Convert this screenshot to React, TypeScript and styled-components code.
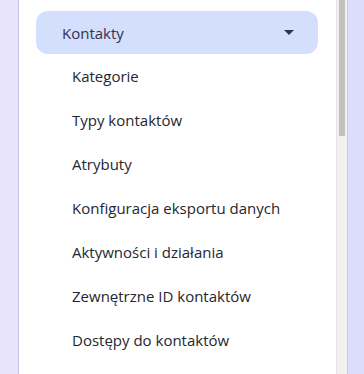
import * as React from 'react'
import styled, { createGlobalStyle } from 'styled-components'

const subItems = [
  'Kategorie',
  'Typy kontaktów',
  'Atrybuty',
  'Konfiguracja eksportu danych',
  'Aktywności i działania',
  'Zewnętrzne ID kontaktów',
  'Dostępy do kontaktów',
]

const App = () => {
  return (
    <Layout>
      <GlobalStyle />
      <Rail />
      <Sidebar>
        <Menu>
          <Group>
            <GroupHeader>
              <span>Kontakty</span>
              <Caret viewBox="0 0 10 5" aria-hidden>
                <path d="M0 0h10L5 5z" />
              </Caret>
            </GroupHeader>
            {subItems.map(label => (
              <SubItem key={label}>{label}</SubItem>
            ))}
          </Group>
        </Menu>
        <ScrollTrack>
          <ScrollThumb style={{ height: `${(374 / 1030) * 100}%` }} />
        </ScrollTrack>
      </Sidebar>
      <Content />
    </Layout>
  )
}

const GlobalStyle = createGlobalStyle`
  html, body {
    margin: 0;
    padding: 0;
    height: 100%;
    overflow: hidden;
  }
  body {
    font-family: 'Open Sans', 'Noto Sans', sans-serif;
    background: #dcdcfd;
  }
  #root {
    height: 100%;
  }
`

const Layout = styled.div`
  display: flex;
  height: 374px;
`

const Rail = styled.div`
  width: 18px;
  flex-shrink: 0;
  background: #e7e4fc;
  border-right: 1px solid #c6c2e8;
`

const Sidebar = styled.nav`
  display: flex;
  width: 328px;
  flex-shrink: 0;
  background: #ffffff;
  border-right: 1px solid #c9c9e0;
`

const Menu = styled.ul`
  flex: 1;
  list-style: none;
  margin: 0;
  padding: 11px 18px 0 17px;
  overflow: hidden;
`

const Group = styled.li`
  display: flex;
  flex-direction: column;
`

const GroupHeader = styled.div`
  display: flex;
  align-items: center;
  justify-content: space-between;
  height: 43px;
  padding: 0 8px 0 26px;
  border-radius: 12px;
  background: #d4defd;
  color: #2f3350;
  font-size: 15px;
  padding-right: 24px;
`

const Caret = styled.svg`
  width: 10px;
  height: 5px;
  fill: #2f3550;
`

const SubItem = styled.div`
  display: flex;
  align-items: center;
  height: 44px;
  padding-left: 36px;
  color: #26262e;
  font-size: 15px;
`

const ScrollTrack = styled.div`
  width: 10px;
  flex-shrink: 0;
  background: #f1f1f1;
  border-left: 1px solid #e4e4e4;
  display: flex;
  justify-content: center;
`

const ScrollThumb = styled.div`
  width: 6px;
  background: #c1c1c1;
`

const Content = styled.main`
  flex: 1;
  background: #dcdcfd;
`

export default App
